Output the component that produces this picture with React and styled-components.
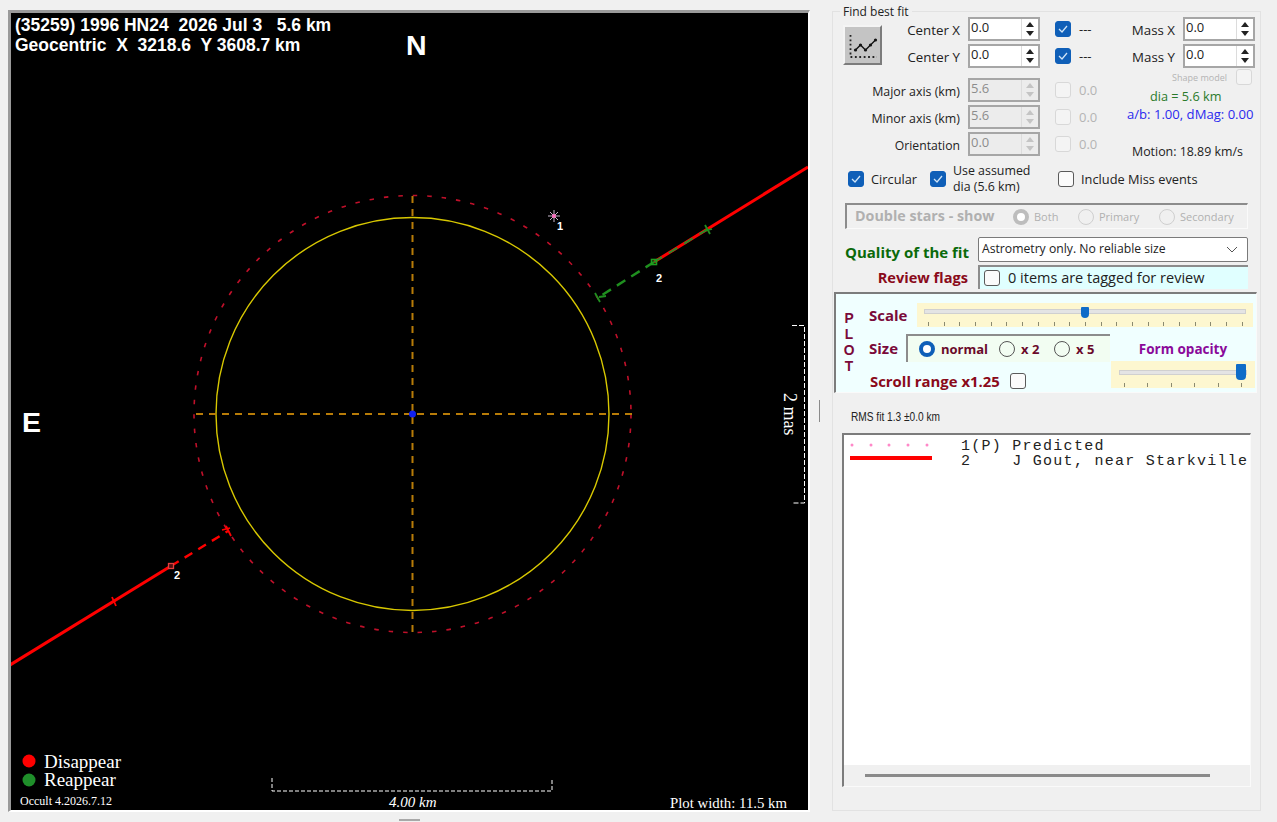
import React from 'react'
import styled, { createGlobalStyle } from 'styled-components'

const UI = '"Open Sans", "Liberation Sans", sans-serif'
const SERIF = '"Liberation Serif", serif'
const ARIAL = '"Liberation Sans", sans-serif'

const GlobalStyle = createGlobalStyle`
  html, body {
    margin: 0;
    padding: 0;
    background: #f0f0f0;
  }
  body {
    font-family: ${UI};
    color: #222;
    overflow: hidden;
  }
`

const Plot = () => (
  <PlotFrame>
    <PlotSvg viewBox="11 13 797 797">
      {/* predicted limb + star body */}
      <circle cx="412.5" cy="414" r="218.5" fill="none" stroke="#c0102a" strokeWidth="1.6" strokeDasharray="4.5 10" />
      <circle cx="412.5" cy="414" r="196.5" fill="none" stroke="#d8c800" strokeWidth="1.4" />
      <line x1="196" y1="414" x2="632" y2="414" stroke="#b87c08" strokeWidth="2" strokeDasharray="7 6" />
      <line x1="412.5" y1="196" x2="412.5" y2="633" stroke="#b87c08" strokeWidth="2" strokeDasharray="7 6" />
      <circle cx="412.5" cy="414" r="3.5" fill="#1020f0" />

      {/* chord, reappear side */}
      <line x1="808" y1="167" x2="654" y2="262" stroke="#ff0000" strokeWidth="3" />
      <line x1="708" y1="229" x2="654" y2="262" stroke="#2a8a2a" strokeWidth="2" strokeDasharray="10 8" />
      <line x1="654" y1="262" x2="599" y2="297" stroke="#1f8f1f" strokeWidth="2.4" strokeDasharray="10 7" />
      <path d="M705 225 L710 234 M704 231 L712 229" stroke="#1f8f1f" strokeWidth="1.8" fill="none" />
      <path d="M595 293 L600 302 M599 297 L606 296" stroke="#1f8f1f" strokeWidth="1.8" fill="none" />
      <rect x="651.5" y="259.5" width="5" height="5" fill="none" stroke="#1f9f1f" strokeWidth="1.6" />

      {/* chord, disappear side */}
      <line x1="10" y1="665" x2="171" y2="566" stroke="#ff0000" strokeWidth="3" />
      <line x1="171" y1="566" x2="228" y2="531" stroke="#ff0000" strokeWidth="2.4" strokeDasharray="9 7" />
      <path d="M222 530 L230 528 M226 526 L231 536" stroke="#ff0000" strokeWidth="1.8" fill="none" />
      <path d="M112 597 L116 606" stroke="#ff0000" strokeWidth="1.8" fill="none" />
      <rect x="168.5" y="563.5" width="5" height="5" fill="#501010" stroke="#e04040" strokeWidth="1.3" />

      {/* star marker */}
      <path d="M554 210 V222 M548 216 H560 M550 212 L558 220 M558 212 L550 220" stroke="#c8b8cc" strokeWidth="1" />
      <circle cx="554" cy="216" r="2" fill="#ff70c0" />

      {/* scale bars */}
      <path d="M272 778 V791 H552 V778" fill="none" stroke="#fff" strokeWidth="1" strokeDasharray="4 2" />
      <path d="M792 325.5 H804.5 V503 H792" fill="none" stroke="#fff" strokeWidth="1" strokeDasharray="5 2" />

      <circle cx="29" cy="761" r="6.5" fill="#ff0000" />
      <circle cx="29" cy="780" r="6.5" fill="#1f8f2a" />
    </PlotSvg>

    <Heading>
      <div>{'(35259) 1996 HN24  2026 Jul 3   5.6 km'}</div>
      <div>{'Geocentric  X  3218.6  Y 3608.7 km'}</div>
    </Heading>
    <Compass $x={395} $y={17}>N</Compass>
    <Compass $x={11} $y={394}>E</Compass>
    <ChordTag $x={163} $y={556}>2</ChordTag>
    <ChordTag $x={645} $y={259}>2</ChordTag>
    <ChordTag $x={546} $y={207}>1</ChordTag>
    <Legend>
      <div>Disappear</div>
      <div>Reappear</div>
    </Legend>
    <Version>Occult 4.2026.7.12</Version>
    <ScaleText>4.00 km</ScaleText>
    <PlotWidth>Plot width: 11.5 km</PlotWidth>
    <MasText>2 mas</MasText>
  </PlotFrame>
)

const Spinner = ({ value, disabled }) => (
  <SpinBox $disabled={disabled}>
    <SpinValue>{value}</SpinValue>
    <SpinButtons>
      <ArrowUp $disabled={disabled} />
      <ArrowDown $disabled={disabled} />
    </SpinButtons>
  </SpinBox>
)

const Check = ({ checked, disabled }) => (
  <CheckBox $checked={checked} $disabled={disabled}>
    {checked && (
      <svg width="10" height="8" viewBox="0 0 10 8">
        <path d="M1 4 L4 7 L9 1" fill="none" stroke="#cfe4f7" strokeWidth="1.3" />
      </svg>
    )}
  </CheckBox>
)

const Radio = ({ checked, disabled }) => <RadioDot $checked={checked} $disabled={disabled} />

const App = () => (
  <>
    <GlobalStyle />
    <Page>
      <Plot />
      <VGrip />
      <Panel>
        <PanelTitle>Find best fit</PanelTitle>

        <TopArea>
          <FieldColumn>
            <FitRow>
              <FitButton>
                <svg width="32" height="32" viewBox="0 0 32 32">
                  <path d="M3.5 6 V28 H30" fill="none" stroke="#222" strokeWidth="1.8" strokeDasharray="1.8 2.6" />
                  <path d="M8.5 21 L13.5 16 L18.5 21 L23.5 16 L28.5 11" fill="none" stroke="#111" strokeWidth="1.3" />
                  {[[8.5, 21], [13.5, 16], [18.5, 21], [23.5, 16], [28.5, 11]].map(([x, y]) => (
                    <circle key={x} cx={x} cy={y} r="1.6" fill="#111" />
                  ))}
                </svg>
              </FitButton>
              <FitFields>
                <Field><FieldLabel $size={13.3}>Center X</FieldLabel><Spinner value="0.0" /></Field>
                <Field><FieldLabel $size={13.3}>Center Y</FieldLabel><Spinner value="0.0" /></Field>
              </FitFields>
            </FitRow>
            <AxisFields>
              <Field><FieldLabel $size={12.4}>Major axis (km)</FieldLabel><Spinner value="5.6" disabled /></Field>
              <Field><FieldLabel $size={12.4}>Minor axis (km)</FieldLabel><Spinner value="5.6" disabled /></Field>
              <Field><FieldLabel $size={12.2}>Orientation</FieldLabel><Spinner value="0.0" disabled /></Field>
            </AxisFields>
          </FieldColumn>

          <FlagColumn>
            <FlagRow><Check checked /><FlagText>---</FlagText></FlagRow>
            <FlagRow><Check checked /><FlagText>---</FlagText></FlagRow>
            <FlagSpacer />
            <FlagRow><Check disabled /><FlagText $muted>0.0</FlagText></FlagRow>
            <FlagRow><Check disabled /><FlagText $muted>0.0</FlagText></FlagRow>
            <FlagRow><Check disabled /><FlagText $muted>0.0</FlagText></FlagRow>
          </FlagColumn>

          <MassColumn>
            <Field><FieldLabel $size={13.3}>Mass X</FieldLabel><Spinner value="0.0" /></Field>
            <Field><FieldLabel $size={13.3}>Mass Y</FieldLabel><Spinner value="0.0" /></Field>
            <ShapeRow><ShapeLabel>Shape model</ShapeLabel><Check disabled /></ShapeRow>
            <DiaText>dia = 5.6 km</DiaText>
            <RatioText>a/b: 1.00, dMag: 0.00</RatioText>
            <MotionText>Motion: 18.89 km/s</MotionText>
          </MassColumn>
        </TopArea>

        <OptionRow>
          <Option $width={82}><Check checked /><span>Circular</span></Option>
          <Option $width={128}><Check checked /><SmallLines>Use assumed<br />dia (5.6 km)</SmallLines></Option>
          <Option><Check /><span>Include Miss events</span></Option>
        </OptionRow>

        <DoubleStars>
          <DoubleTitle>Double stars - show</DoubleTitle>
          <DoubleOption $width={65}><Radio checked disabled /><span>Both</span></DoubleOption>
          <DoubleOption $width={81}><Radio disabled /><span>Primary</span></DoubleOption>
          <DoubleOption><Radio disabled /><span>Secondary</span></DoubleOption>
        </DoubleStars>

        <QualityRow>
          <QualityLabel>Quality of the fit</QualityLabel>
          <SelectBox>
            <SelectText>Astrometry only. No reliable size</SelectText>
            <svg width="12" height="7" viewBox="0 0 12 7">
              <path d="M1 1 L6 6 L11 1" fill="none" stroke="#555" strokeWidth="1" />
            </svg>
          </SelectBox>
        </QualityRow>

        <ReviewRow>
          <ReviewLabel>Review flags</ReviewLabel>
          <ReviewBox><Check /><ReviewText>0 items are tagged for review</ReviewText></ReviewBox>
        </ReviewRow>

        <PlotPanel>
          <PlotLetters><span>P</span><span>L</span><span>O</span><span>T</span></PlotLetters>
          <PlotBody>
            <ScaleRow>
              <PlotLabel>Scale</PlotLabel>
              <SliderWell $width={336} $height={24}>
                <SliderTrack $top={6} $inset={7} />
                <SliderThumb $top={4} $w={8} $h={11} style={{ left: `${(168 - 4)}px` }} />
                <Ticks $left={11} $right={10}>{Array.from({ length: 21 }, (_, i) => <Tick key={i} />)}</Ticks>
              </SliderWell>
            </ScaleRow>
            <SizeRow>
              <SizeLeft>
                <SizeLine>
                  <PlotLabel>Size</PlotLabel>
                  <SizeBox>
                    <SizeOption $width={80}><Radio checked /><span>normal</span></SizeOption>
                    <SizeOption $width={55}><Radio /><span>x 2</span></SizeOption>
                    <SizeOption><Radio /><span>x 5</span></SizeOption>
                  </SizeBox>
                </SizeLine>
                <ScrollLine>
                  <ScrollLabel>Scroll range x1.25</ScrollLabel>
                  <Check />
                </ScrollLine>
              </SizeLeft>
              <OpacityBlock>
                <OpacityLabel>Form opacity</OpacityLabel>
                <SliderWell $width={144} $height={27}>
                  <SliderTrack $top={9} $inset={8} />
                  <SliderThumb $top={3} $w={10} $h={16} style={{ left: '125px' }} />
                  <Ticks $left={13} $right={13}>{Array.from({ length: 6 }, (_, i) => <Tick key={i} />)}</Ticks>
                </SliderWell>
              </OpacityBlock>
            </SizeRow>
          </PlotBody>
        </PlotPanel>

        <RmsText>RMS fit 1.3 ±0.0 km</RmsText>

        <ListFrame>
          <ListBody>
            <ListRow>
              <Swatch $top={3} viewBox="0 0 82 6">
                {[2, 21, 39, 58, 77].map((x) => <circle key={x} cx={x} cy="3" r="1.5" fill="#ff88c8" />)}
              </Swatch>
              <ListText>{'1(P) Predicted'}</ListText>
            </ListRow>
            <ListRow>
              <Swatch $top={1} viewBox="0 0 82 6">
                <line x1="0" y1="3" x2="82" y2="3" stroke="#ff0000" strokeWidth="4" />
              </Swatch>
              <ListText>{'2    J Gout, near Starkville'}</ListText>
            </ListRow>
          </ListBody>
          <ScrollTrack><ScrollThumb /></ScrollTrack>
        </ListFrame>
      </Panel>
    </Page>
    <HGrip />
  </>
)

const Page = styled.div`
  display: flex;
  align-items: flex-start;
  width: 1277px;
  height: 822px;
  padding: 10px 0 0 8px;
  box-sizing: border-box;
`

const PlotFrame = styled.div`
  position: relative;
  flex: none;
  width: 797px;
  height: 797px;
  background: #000;
  border-top: 3px solid #9a9a9a;
  border-left: 3px solid #9a9a9a;
  border-right: 2px solid #fff;
  border-bottom: 2px solid #fff;
  overflow: hidden;
`

const PlotSvg = styled.svg`
  display: block;
  width: 797px;
  height: 797px;
`

const Heading = styled.div`
  position: absolute;
  left: 4px;
  top: 2px;
  font: bold 17.5px/20px ${ARIAL};
  color: #fff;
  white-space: pre;
`

const Compass = styled.div`
  position: absolute;
  left: ${({ $x }) => $x}px;
  top: ${({ $y }) => $y}px;
  font: bold 28.5px/30px ${ARIAL};
  color: #fff;
`

const ChordTag = styled.div`
  position: absolute;
  left: ${({ $x }) => $x}px;
  top: ${({ $y }) => $y}px;
  font: bold 11px/12px ${ARIAL};
  color: #fff;
`

const Legend = styled.div`
  position: absolute;
  left: 33px;
  top: 740px;
  font: 19px/18px ${SERIF};
  color: #fff;
`

const Version = styled.div`
  position: absolute;
  left: 9px;
  top: 781px;
  font: 12px/14px ${SERIF};
  color: #fff;
`

const ScaleText = styled.div`
  position: absolute;
  left: 378px;
  top: 781px;
  font: italic 15px/16px ${SERIF};
  color: #fff;
`

const PlotWidth = styled.div`
  position: absolute;
  right: 21px;
  top: 782px;
  font: 14.8px/16px ${SERIF};
  color: #fff;
`

const MasText = styled.div`
  position: absolute;
  left: 769px;
  top: 380px;
  font: 18px/20px ${SERIF};
  color: #fff;
  writing-mode: vertical-rl;
`

const VGrip = styled.div`
  flex: none;
  width: 1px;
  height: 22px;
  margin: 390px 12px 0 9px;
  background: #8a8a8a;
`

const HGrip = styled.div`
  position: absolute;
  left: 399px;
  top: 819px;
  width: 21px;
  height: 2px;
  background: #a8a8a8;
`

const Panel = styled.div`
  position: relative;
  flex: none;
  width: 429px;
  height: 800px;
  margin-top: 1px;
  padding: 5px 0 0 1px;
  box-sizing: border-box;
  border: 1px solid #e2e2e2;
`

const PanelTitle = styled.div`
  position: absolute;
  left: 7px;
  top: -9px;
  padding: 0 3px;
  background: #f0f0f0;
  font-size: 12px;
  line-height: 18px;
`

const TopArea = styled.div`
  display: flex;
  margin-left: 9px;
`

const FieldColumn = styled.div`
  flex: none;
  width: 197px;
`

const FitRow = styled.div`
  display: flex;
  justify-content: space-between;
`

const FitButton = styled.div`
  display: flex;
  align-items: center;
  justify-content: center;
  width: 39px;
  height: 40px;
  margin-top: 8px;
  box-sizing: border-box;
  background: #c4c4c4;
  border: 2px solid;
  border-color: #f4f4f4 #7c7c7c #7c7c7c #f4f4f4;
`

const FitFields = styled.div`
  display: flex;
  flex-direction: column;
  gap: 3px;
`

const AxisFields = styled(FitFields)`
  margin-top: 10px;
`

const Field = styled.div`
  display: flex;
  align-items: center;
  justify-content: flex-end;
  gap: 8px;
  height: 24px;
`

const FieldLabel = styled.span`
  padding-top: 2px;
  font-size: ${({ $size }) => $size}px;
  white-space: nowrap;
`

const SpinBox = styled.div`
  display: flex;
  width: 72px;
  height: 24px;
  box-sizing: border-box;
  border: 2px solid #a6a6a6;
  background: ${({ $disabled }) => ($disabled ? '#ececec' : '#fff')};
  color: ${({ $disabled }) => ($disabled ? '#8c8c8c' : '#222')};
`

const SpinValue = styled.span`
  flex: 1;
  padding-left: 1px;
  font-size: 13px;
  line-height: 17px;
`

const SpinButtons = styled.div`
  display: flex;
  flex-direction: column;
  align-items: center;
  justify-content: center;
  gap: 4px;
  width: 16px;
  border-left: 1px solid #dcdcdc;
`

const ArrowUp = styled.i`
  width: 0;
  height: 0;
  border-left: 4px solid transparent;
  border-right: 4px solid transparent;
  border-bottom: 5px solid ${({ $disabled }) => ($disabled ? '#c4c4c4' : '#222')};
`

const ArrowDown = styled.i`
  width: 0;
  height: 0;
  border-left: 4px solid transparent;
  border-right: 4px solid transparent;
  border-top: 5px solid ${({ $disabled }) => ($disabled ? '#c4c4c4' : '#222')};
`

const FlagColumn = styled.div`
  flex: none;
  display: flex;
  flex-direction: column;
  gap: 3px;
  width: 60px;
  margin-left: 15px;
`

const FlagRow = styled.div`
  display: flex;
  align-items: center;
  gap: 8px;
  height: 24px;
`

const FlagSpacer = styled.div`
  height: 4px;
`

const FlagText = styled.span`
  font-size: 13px;
  color: ${({ $muted }) => ($muted ? '#b4b4b4' : '#222')};
`

const CheckBox = styled.span`
  flex: none;
  display: inline-flex;
  align-items: center;
  justify-content: center;
  width: 16px;
  height: 16px;
  box-sizing: border-box;
  border-radius: 3px;
  background: ${({ $checked, $disabled }) => ($checked ? '#0f5fb8' : $disabled ? '#f4f4f4' : '#fbfbfb')};
  border: 1px solid ${({ $checked, $disabled }) => ($checked ? '#0f5fb8' : $disabled ? '#d8d8d8' : '#5a5a5a')};
`

const MassColumn = styled.div`
  flex: none;
  display: flex;
  flex-direction: column;
  width: 140px;
  margin-left: 0;
  > div:nth-child(2) {
    margin-top: 3px;
  }
`

const ShapeRow = styled.div`
  display: flex;
  align-items: center;
  justify-content: flex-end;
  gap: 9px;
  height: 16px;
  margin: 1px 3px 0 0;
`

const ShapeLabel = styled.span`
  font-size: 9px;
  color: #b4b4b4;
`

const DiaText = styled.div`
  margin-top: 2px;
  padding-left: 35px;
  font-size: 12.7px;
  line-height: 18px;
  color: #2a7a2a;
`

const RatioText = styled.div`
  padding-left: 12px;
  font-size: 13.1px;
  line-height: 18px;
  color: #2a2aee;
  white-space: nowrap;
`

const MotionText = styled.div`
  margin-top: 20px;
  padding-left: 17px;
  font-size: 12.4px;
  line-height: 18px;
  white-space: nowrap;
`

const OptionRow = styled.div`
  display: flex;
  align-items: center;
  height: 32px;
  margin: 2px 0 0 14px;
  font-size: 12.8px;
`

const Option = styled.div`
  flex: none;
  display: flex;
  align-items: center;
  gap: 7px;
  width: ${({ $width }) => ($width ? `${$width}px` : 'auto')};
`

const SmallLines = styled.span`
  font-size: 12.4px;
  line-height: 16px;
`

const DoubleStars = styled.div`
  display: flex;
  align-items: center;
  width: 403px;
  height: 26px;
  margin: 8px 0 0 11px;
  padding-left: 8px;
  box-sizing: border-box;
  border-top: 2px solid #8c8c8c;
  border-left: 2px solid #8c8c8c;
  border-right: 1px solid #fafafa;
  border-bottom: 1px solid #fafafa;
  color: #b0b0b0;
`

const DoubleTitle = styled.span`
  width: 158px;
  padding-bottom: 2px;
  font-size: 14.3px;
  font-weight: 700;
  white-space: nowrap;
`

const DoubleOption = styled.span`
  display: flex;
  align-items: center;
  gap: 5px;
  width: ${({ $width }) => ($width ? `${$width}px` : 'auto')};
  font-size: 11px;
`

const RadioDot = styled.span`
  flex: none;
  width: 16px;
  height: 16px;
  box-sizing: border-box;
  border-radius: 50%;
  background: ${({ $checked }) => ($checked ? '#fff' : 'transparent')};
  border: ${({ $checked, $disabled }) =>
    $checked ? `4px solid ${$disabled ? '#bdbdbd' : '#0f5fb8'}` : `1px solid ${$disabled ? '#cfcfcf' : '#555'}`};
`

const QualityRow = styled.div`
  display: flex;
  align-items: center;
  gap: 7px;
  margin: 8px 0 0 11px;
`

const QualityLabel = styled.span`
  width: 126px;
  padding-top: 4px;
  font-size: 15px;
  font-weight: 700;
  color: #0a6a0a;
  white-space: nowrap;
`

const SelectBox = styled.div`
  display: flex;
  align-items: center;
  justify-content: space-between;
  width: 270px;
  height: 25px;
  padding: 0 9px 0 3px;
  box-sizing: border-box;
  background: #fff;
  border: 1px solid #7a7a7a;
  border-radius: 2px;
`

const SelectText = styled.span`
  padding-bottom: 2px;
  font-size: 12.2px;
`

const ReviewRow = styled.div`
  display: flex;
  align-items: center;
  justify-content: flex-end;
  gap: 10px;
  width: 414px;
  margin-top: 3px;
`

const ReviewLabel = styled.span`
  font-size: 14.6px;
  font-weight: 700;
  color: #8a0a1a;
`

const ReviewBox = styled.div`
  display: flex;
  align-items: center;
  gap: 8px;
  width: 270px;
  height: 24px;
  padding-left: 4px;
  box-sizing: border-box;
  background: #e0ffff;
  border-top: 2px solid #8c8c8c;
  border-left: 2px solid #8c8c8c;
`

const ReviewText = styled.span`
  padding-bottom: 2px;
  font-size: 14.5px;
  white-space: nowrap;
`

const PlotPanel = styled.div`
  display: flex;
  width: 423px;
  height: 101px;
  margin-top: 3px;
  box-sizing: border-box;
  background: #f0ffff;
  border-top: 2px solid #7c7c7c;
  border-left: 2px solid #7c7c7c;
  border-right: 1px solid #fafafa;
  border-bottom: 1px solid #fafafa;
`

const PlotLetters = styled.div`
  flex: none;
  display: flex;
  flex-direction: column;
  align-items: center;
  width: 26px;
  padding: 17px 2px 0 0;
  font: bold 13.8px/16px ${ARIAL};
  color: #7a0a3a;
`

const PlotBody = styled.div`
  flex: 1;
  min-width: 0;
  padding-top: 9px;
`

const ScaleRow = styled.div`
  display: flex;
  align-items: center;
  height: 24px;
  margin-left: 5px;
`

const PlotLabel = styled.span`
  width: 48px;
  padding-bottom: 1px;
  font-size: 15px;
  font-weight: 700;
  color: #7a0a3a;
`

const SliderWell = styled.div`
  position: relative;
  flex: none;
  width: ${({ $width }) => $width}px;
  height: ${({ $height }) => $height}px;
  background: #fdf7d0;
  overflow: hidden;
`

const SliderTrack = styled.div`
  margin: ${({ $top }) => $top}px ${({ $inset }) => $inset}px 0;
  height: 3px;
  background: #e4e4e4;
  border: 1px solid #d0d0d0;
`

const SliderThumb = styled.div`
  position: absolute;
  top: ${({ $top }) => $top}px;
  width: ${({ $w }) => $w}px;
  height: ${({ $h }) => $h}px;
  background: #0f6cc8;
  border-radius: 1px 1px 4px 4px;
`

const Ticks = styled.div`
  position: absolute;
  left: ${({ $left }) => $left}px;
  right: ${({ $right }) => $right}px;
  bottom: 1px;
  display: flex;
  justify-content: space-between;
`

const Tick = styled.i`
  width: 1px;
  height: 4px;
  background: #8a8a70;
`

const SizeRow = styled.div`
  display: flex;
`

const SizeLeft = styled.div`
  flex: none;
  width: 242px;
  margin-top: 7px;
  margin-left: 5px;
`

const SizeLine = styled.div`
  display: flex;
  align-items: center;
`

const SizeBox = styled.div`
  display: flex;
  align-items: center;
  width: 204px;
  height: 28px;
  margin-left: -11px;
  padding-left: 11px;
  box-sizing: border-box;
  background: #f2fdf2;
  border-top: 2px solid #8c8c8c;
  border-left: 2px solid #8c8c8c;
`

const SizeOption = styled.span`
  flex: none;
  display: flex;
  align-items: center;
  gap: 6px;
  width: ${({ $width }) => ($width ? `${$width}px` : 'auto')};
  font-size: 13px;
  font-weight: 700;
  color: #6a0a2a;
`

const ScrollLine = styled.div`
  display: flex;
  align-items: center;
  gap: 10px;
  margin: 9px 0 0 1px;
`

const ScrollLabel = styled.span`
  font-size: 14.9px;
  font-weight: 700;
  color: #8a0a1a;
  white-space: nowrap;
`

const OpacityBlock = styled.div`
  flex: none;
  display: flex;
  flex-direction: column;
  align-items: center;
  margin-top: 13px;
`

const OpacityLabel = styled.span`
  height: 21px;
  font-size: 13.5px;
  font-weight: 700;
  line-height: 18px;
  color: #8a0a9a;
`

const RmsText = styled.div`
  margin: 15px 0 0 17px;
  font: 13px/18px ${ARIAL};
  white-space: pre;
  transform: scaleX(0.78);
  transform-origin: left center;
`

const ListFrame = styled.div`
  width: 409px;
  height: 354px;
  margin: 7px 0 0 8px;
  box-sizing: border-box;
  display: flex;
  flex-direction: column;
  border-top: 2px solid #7c7c7c;
  border-left: 2px solid #7c7c7c;
  border-right: 1px solid #fafafa;
  border-bottom: 1px solid #fafafa;
`

const ListBody = styled.div`
  flex: 1;
  padding: 4px 0 0 6px;
  background: #fff;
  overflow: hidden;
`

const ListRow = styled.div`
  display: flex;
  align-items: flex-start;
  gap: 29px;
  height: 15px;
`

const Swatch = styled.svg`
  flex: none;
  width: 82px;
  height: 6px;
  margin-top: ${({ $top }) => $top}px;
`

const ListText = styled.span`
  display: block;
  height: 15px;
  font: 15px/15px "Liberation Mono", monospace;
  letter-spacing: 1.26px;
  white-space: pre;
  color: #222;
`

const ScrollTrack = styled.div`
  flex: none;
  display: flex;
  align-items: center;
  height: 21px;
  padding-left: 21px;
`

const ScrollThumb = styled.div`
  width: 345px;
  height: 3px;
  background: #8a8a8a;
`

export default App
